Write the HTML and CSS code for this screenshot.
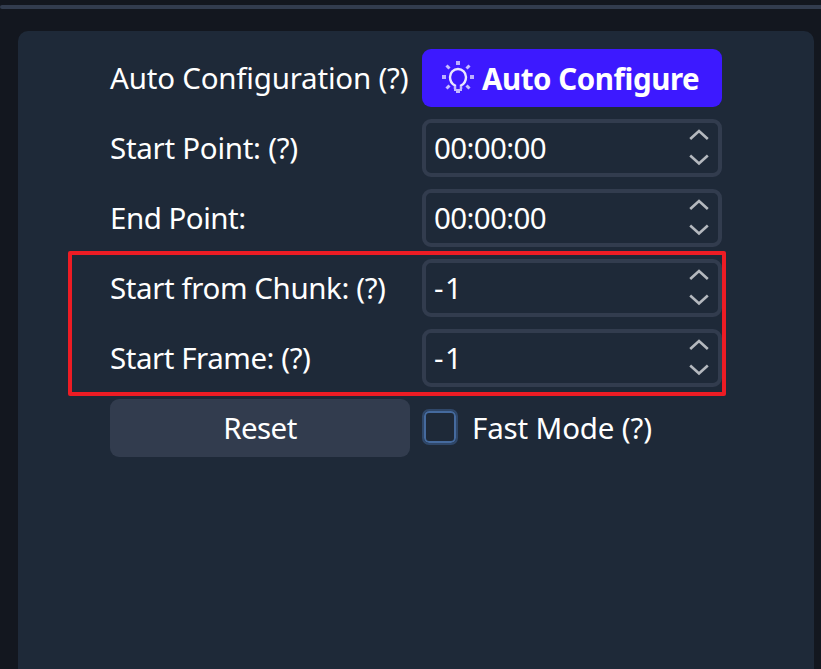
FILE: index.html
```html
<!DOCTYPE html>
<html lang="en">
<head>
<meta charset="utf-8">
<title>Configuration</title>
<link rel="stylesheet" href="styles.css">
</head>
<body>
<svg class="symbols" aria-hidden="true">
  <symbol id="arrows" viewBox="0 0 20 40">
    <path d="M1.2 11 10 3 18.800 11M1.200 27.500 10 35.500 18.800 27.500"/>
  </symbol>
</svg>
<div class="divider"></div>
<main class="panel">
  <div class="form">
    <label class="label"><span class="t-auto">Auto Configuration (?)</span></label>
    <button class="button primary">
      <svg class="bulb" viewBox="0 0 34 34">
        <path class="glass" d="M14 28v-3.500c-3-1.500-5-4.200-5-8.500a8 8 0 0 1 16 0c0 4.300-2 7-5 8.500V28"/>
        <path class="base" d="M14 25v4h6v-4M15 31h4"/>
        <path class="rays" d="M15 0h4v4h-4zM1 14h4v4H1zM29 14h4v4h-4z"/>
        <path class="diagonals" d="M5.500 4.500l3 3M28.500 4.500l-3 3M5.500 27.500l3-3M28.500 27.500l-3-3"/>
      </svg>
      <span class="t-configure">Auto Configure</span>
    </button>
    <label class="label"><span class="t-start">Start Point: (?)</span></label>
    <div class="field"><span class="t-time">00:00:00</span><svg class="arrows"><use href="#arrows"/></svg></div>
    <label class="label"><span class="t-end">End Point:</span></label>
    <div class="field"><span class="t-time">00:00:00</span><svg class="arrows"><use href="#arrows"/></svg></div>
    <label class="label"><span class="t-chunk">Start from Chunk: (?)</span></label>
    <div class="field"><span class="t-one">-1</span><svg class="arrows"><use href="#arrows"/></svg></div>
    <label class="label"><span class="t-frame">Start Frame: (?)</span></label>
    <div class="field"><span class="t-one">-1</span><svg class="arrows"><use href="#arrows"/></svg></div>
    <button class="button"><span class="t-reset">Reset</span></button>
    <label class="check"><span class="box"></span><span class="t-fast">Fast Mode (?)</span></label>
  </div>
  <div class="highlight"></div>
</main>
</body>
</html>
```
FILE: styles.css
```css
* { box-sizing: border-box; }
body {
  margin: 0;
  height: 669px;
  padding-top: 5px;
  overflow: hidden;
  background: #13171f;
  color: #fff;
  font: 29.5px/40px "Noto Sans", "Segoe UI", sans-serif;
}
.symbols { display: none; }
.divider { height: 4px; background: #323c4e; border-radius: 2px 0 0 2px; }
.panel {
  position: relative;
  margin: 22px 7px 0 18px;
  height: 660px;
  padding: 18px 92px;
  background: #1e2938;
  border-radius: 10px;
}
.form {
  display: grid;
  grid-template-columns: 300px 300px;
  grid-auto-rows: 58px;
  gap: 12px;
}
.form span { white-space: nowrap; }
.t-auto { letter-spacing: -0.2px; }
.t-start { letter-spacing: -0.27px; }
.t-end { letter-spacing: -0.5px; }
.t-chunk { letter-spacing: -0.4px; }
.t-frame { letter-spacing: -0.45px; }
.t-time { letter-spacing: -0.65px; }
.t-one { letter-spacing: 1.5px; }
.t-reset { letter-spacing: -0.6px; }
.t-fast { letter-spacing: -0.15px; }
.t-configure { padding-top: 1px; letter-spacing: -0.43px; }
.label, .check, .field, .button { display: flex; align-items: center; }
.button {
  justify-content: center;
  padding: 0;
  border: 0;
  border-radius: 9px;
  background: #323c4e;
  color: #fff;
  font: inherit;
}
.primary {
  justify-content: flex-start;
  padding-left: 19px;
  background: #3d19ff;
  font-weight: 700;
}
.bulb { width: 34px; height: 34px; margin-right: 7px; flex: none; }
.bulb path { fill: none; stroke: #e9e5ff; stroke-width: 2.4; }
.bulb .base { stroke: #c3b8ff; stroke-width: 2; }
.bulb .rays { fill: #bcb0ff; stroke: none; }
.bulb .diagonals { stroke: #c9c0ff; stroke-width: 3; }
.field {
  justify-content: space-between;
  padding: 0 9px 0 8px;
  border: 4px solid #323c4e;
  border-radius: 9px;
}
.arrows {
  width: 20px;
  height: 40px;
  fill: none;
  stroke: #b4b8be;
  stroke-width: 2.6;
}
.check { gap: 14px; }
.box {
  width: 36px;
  height: 36px;
  margin-top: -3px;
  border: 2px solid #2f4769;
  border-radius: 7px;
  box-shadow: inset 0 0 0 2px #456a9e;
}
.highlight {
  position: absolute;
  left: 50px;
  top: 220px;
  width: 658px;
  height: 145px;
  border: 4px solid #ed1c24;
  border-radius: 2px;
}
```
